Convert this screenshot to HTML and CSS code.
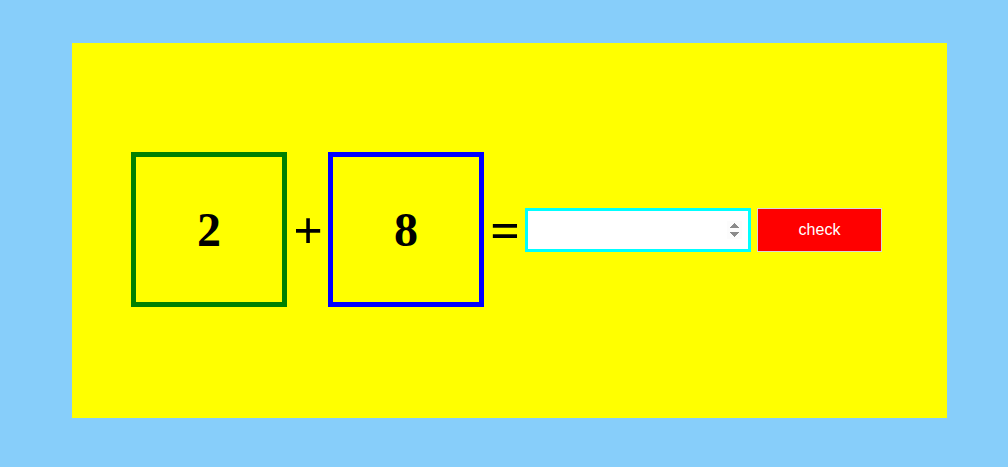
FILE: index.html
```html
<!DOCTYPE html>
<html>
<head>
<meta charset="utf-8">
<link rel="stylesheet" href="styles.css">
</head>
<body>
<div class="page">
  <div class="panel">
    <div class="box box-green">2</div>
    <span class="op op-plus">+</span>
    <div class="box box-blue">8</div>
    <span class="op op-eq">=</span>
    <input class="answer" type="number">
    <button class="check">check</button>
  </div>
</div>
</body>
</html>
```
FILE: styles.css
```css
html, body {
  margin: 0;
  padding: 0;
  background: #87cefa;
}
.page {
  padding: 43px 0 0 72px;
}
.panel {
  width: 875px;
  height: 375px;
  background: #ffff00;
  display: flex;
  align-items: center;
  padding-left: 59px;
  box-sizing: border-box;
}
.box {
  flex: 0 0 auto;
  width: 156px;
  height: 155px;
  margin-bottom: 2px;
  box-sizing: border-box;
  border: 5px solid;
  display: flex;
  align-items: center;
  justify-content: center;
  font-family: "Liberation Serif", serif;
  font-weight: bold;
  font-size: 48px;
  color: #000;
}
.box-green { border-color: #008000; }
.box-blue { border-color: #0000ff; }
.op {
  flex: 0 0 auto;
  width: 30px;
  margin: 0 5px 0 6px;
  text-align: center;
  font-family: "Liberation Serif", serif;
  font-weight: bold;
  font-size: 52px;
  color: #000;
  line-height: 1;
}
.answer {
  flex: 0 0 auto;
  width: 226px;
  height: 44px;
  margin: 0 0 1px 0;
  box-sizing: border-box;
  border: 3px solid #00ffff;
  background: #fff;
  outline: none;
  padding: 0 6px;
  font-size: 16px;
}
.answer::-webkit-inner-spin-button {
  opacity: 1;
}
.check {
  flex: 0 0 auto;
  width: 125px;
  height: 44px;
  margin: 0 0 1px 6px;
  box-sizing: border-box;
  background: #ff0000;
  border: 1px solid #d8d8d8;
  color: #fff;
  font-family: "Liberation Sans", Arial, sans-serif;
  font-size: 16px;
  padding: 0;
}
```
